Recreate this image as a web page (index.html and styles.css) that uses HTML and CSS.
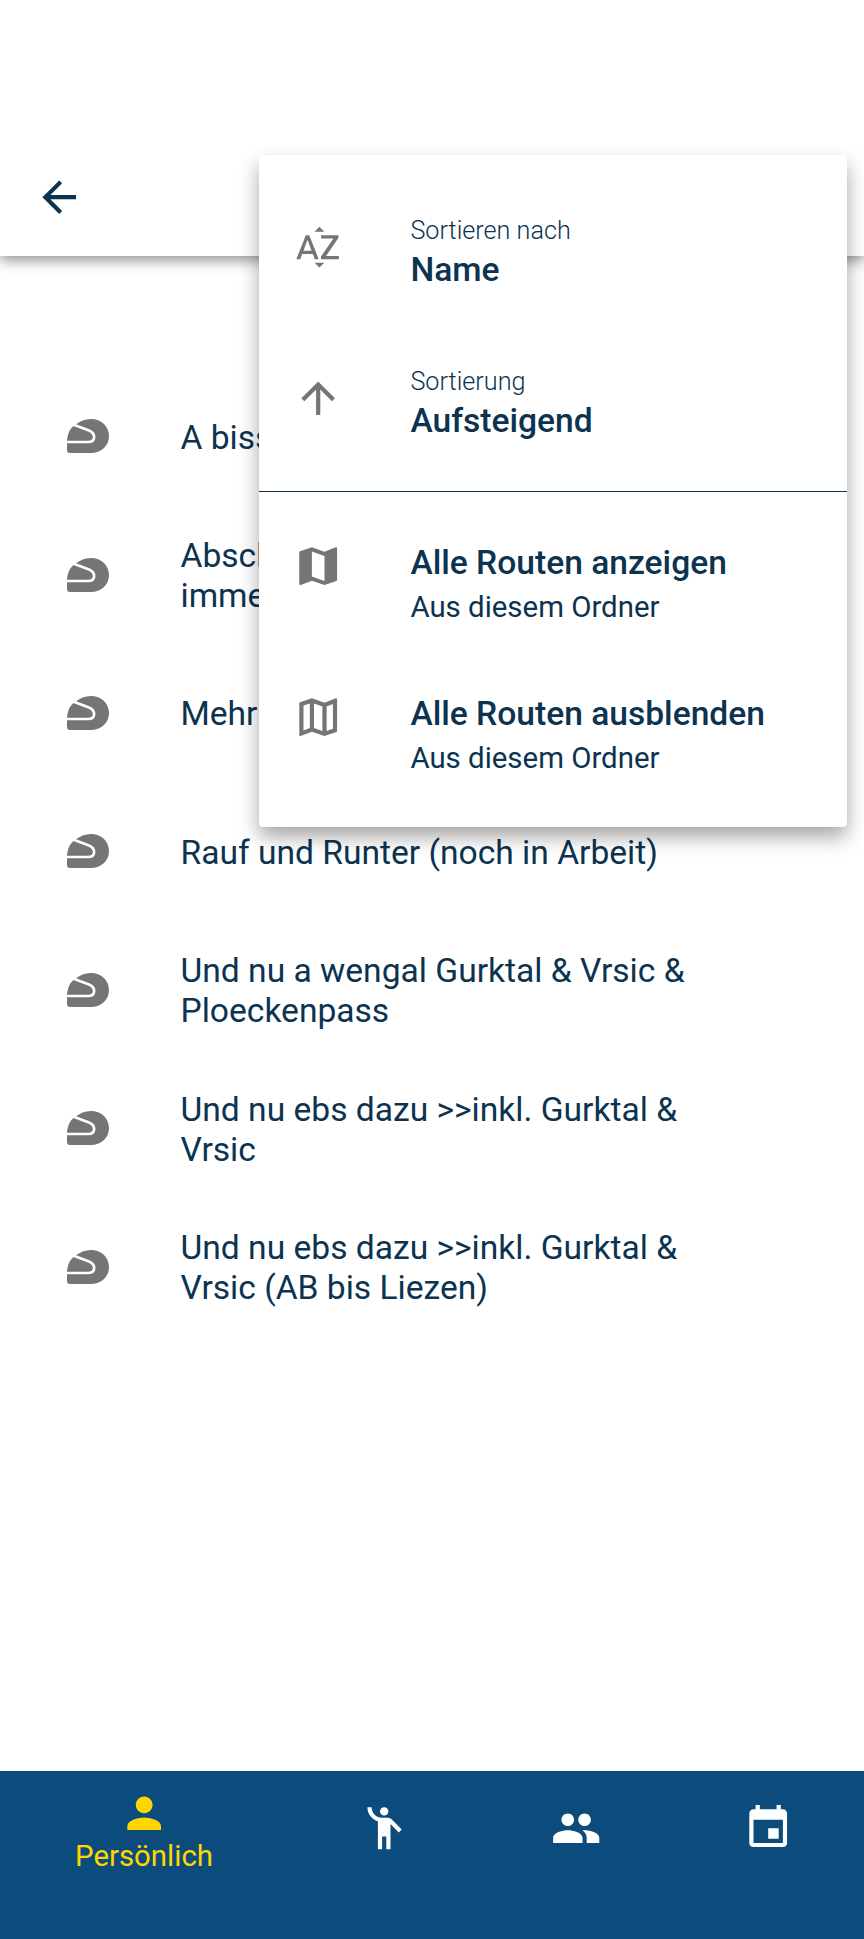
FILE: index.html
```html
<!DOCTYPE html>
<html lang="de">
  <head>
    <meta name="viewport" content="width=device-width, initial-scale=1.0" />
    <meta charset="utf-8" />
    <title>Routen</title>
    <link rel="stylesheet" href="styles.css">
  </head>
  <body>
    <div id="container">
      <header class="app-bar">
        <svg class="icon back-icon" viewBox="0 0 24 24"><path d="M20 11H7.83l5.59-5.59L12 4l-8 8 8 8 1.41-1.41L7.83 13H20v-2z"/></svg>
      </header>

      <main class="route-list">
        <div class="route-row">
          <svg class="helmet" viewBox="0 0 42 34"><use href="#helmet-shape"/></svg>
          <span class="route-name">A bissl wos geht immer</span>
        </div>
        <div class="route-row">
          <svg class="helmet" viewBox="0 0 42 34"><use href="#helmet-shape"/></svg>
          <span class="route-name">Abschlussrunde durch das Murtal, immer noch schön</span>
        </div>
        <div class="route-row">
          <svg class="helmet" viewBox="0 0 42 34"><use href="#helmet-shape"/></svg>
          <span class="route-name">Mehr Kurven im Murtal</span>
        </div>
        <div class="route-row">
          <svg class="helmet" viewBox="0 0 42 34"><use href="#helmet-shape"/></svg>
          <span class="route-name">Rauf und Runter (noch in Arbeit)</span>
        </div>
        <div class="route-row">
          <svg class="helmet" viewBox="0 0 42 34"><use href="#helmet-shape"/></svg>
          <span class="route-name">Und nu a wengal Gurktal &amp; Vrsic &amp; Ploeckenpass</span>
        </div>
        <div class="route-row">
          <svg class="helmet" viewBox="0 0 42 34"><use href="#helmet-shape"/></svg>
          <span class="route-name">Und nu ebs dazu &gt;&gt;inkl. Gurktal &amp; Vrsic</span>
        </div>
        <div class="route-row">
          <svg class="helmet" viewBox="0 0 42 34"><use href="#helmet-shape"/></svg>
          <span class="route-name">Und nu ebs dazu &gt;&gt;inkl. Gurktal &amp; Vrsic (AB bis Liezen)</span>
        </div>
      </main>

      <!-- popup menu lies over the list -->
      <div class="popup-menu">
        <div class="menu-group sort-group">
          <div class="menu-item">
            <svg class="icon" viewBox="0 0 24 24"><path d="M14.94 4.66h-4.72l2.36-2.36zm-4.69 14.71h4.66l-2.33 2.33zM6.1 6.27L1.6 17.73h1.84l.92-2.45h5.11l.92 2.45h1.84L7.74 6.27H6.1zm-1.13 7.37l1.94-5.18 1.94 5.18H4.97zm10.76 2.5h6.12v1.59h-8.53v-1.29l5.92-8.56h-5.88v-1.6h8.3v1.26l-5.93 8.6z"/></svg>
            <div class="menu-text">
              <span class="menu-hint">Sortieren nach</span>
              <span class="menu-title">Name</span>
            </div>
          </div>
          <div class="menu-item">
            <svg class="icon" viewBox="0 0 24 24"><path d="M4 12l1.41 1.41L11 7.83V20h2V7.83l5.58 5.59L20 12l-8-8-8 8z"/></svg>
            <div class="menu-text">
              <span class="menu-hint">Sortierung</span>
              <span class="menu-title">Aufsteigend</span>
            </div>
          </div>
        </div>
        <div class="menu-group toggle-group">
          <div class="menu-item">
            <svg class="icon" viewBox="0 0 24 24"><path d="M20.5 3l-.16.03L15 5.1 9 3 3.36 4.9c-.21.07-.36.25-.36.48V20.5c0 .28.22.5.5.5l.16-.03L9 18.9l6 2.1 5.64-1.9c.21-.07.36-.25.36-.48V3.5c0-.28-.22-.5-.5-.5zM15 19l-6-2.11V5l6 2.11V19z"/></svg>
            <div class="menu-text">
              <span class="menu-title">Alle Routen anzeigen</span>
              <span class="menu-sub">Aus diesem Ordner</span>
            </div>
          </div>
          <div class="menu-item">
            <svg class="icon" viewBox="0 0 24 24"><path d="M20.5 3l-.16.03L15 5.1 9 3 3.36 4.9c-.21.07-.36.25-.36.48V20.5c0 .28.22.5.5.5l.16-.03L9 18.9l6 2.1 5.64-1.9c.21-.07.36-.25.36-.48V3.5c0-.28-.22-.5-.5-.5zM10 5.47l4 1.4v11.66l-4-1.4V5.47zm-5 .99l3-1.01v11.7l-3 1.16V6.46zm14 11.08l-3 1.01V6.86l3-1.16v11.84z"/></svg>
            <div class="menu-text">
              <span class="menu-title">Alle Routen ausblenden</span>
              <span class="menu-sub">Aus diesem Ordner</span>
            </div>
          </div>
        </div>
      </div>

      <nav class="bottom-nav">
        <div class="nav-item active">
          <svg class="icon" viewBox="0 0 24 24"><path d="M12 12c2.21 0 4-1.79 4-4s-1.79-4-4-4-4 1.79-4 4 1.79 4 4 4zm0 2c-2.67 0-8 1.34-8 4v2h16v-2c0-2.66-5.33-4-8-4z"/></svg>
          <span class="nav-label">Persönlich</span>
        </div>
        <div class="nav-item">
          <svg class="icon" viewBox="0 0 24 24"><circle cx="12" cy="4" r="2"/><path d="M15.89 8.11C15.5 7.72 14.83 7 13.53 7h-2.54C8.24 6.99 6 4.75 6 2H4c0 3.16 2.11 5.84 5 6.71V22h2v-6h2v6h2V10.05L18.95 14l1.41-1.41-4.47-4.48z"/></svg>
        </div>
        <div class="nav-item">
          <svg class="icon" viewBox="0 0 24 24"><path d="M16 11c1.66 0 2.99-1.34 2.99-3S17.66 5 16 5c-1.66 0-3 1.34-3 3s1.34 3 3 3zm-8 0c1.66 0 2.99-1.34 2.99-3S9.66 5 8 5C6.34 5 5 6.34 5 8s1.34 3 3 3zm0 2c-2.33 0-7 1.17-7 3.5V19h14v-2.5c0-2.33-4.67-3.5-7-3.5zm8 0c-.29 0-.62.02-.97.05 1.16.84 1.97 1.97 1.97 3.45V19h6v-2.5c0-2.33-4.67-3.5-7-3.5z"/></svg>
        </div>
        <div class="nav-item">
          <svg class="icon" viewBox="0 0 24 24"><path d="M17 12h-5v5h5v-5zM16 1v2H8V1H6v2H5c-1.11 0-1.99.9-1.99 2L3 19c0 1.1.89 2 2 2h14c1.1 0 2-.9 2-2V5c0-1.1-.9-2-2-2h-1V1h-2zm3 18H5V8h14v11z"/></svg>
        </div>
      </nav>
    </div>

    <svg class="icon-defs" width="0" height="0">
      <defs>
        <g id="helmet-shape">
          <path class="helmet-body" d="M0 21C1 14 3 9 8 6C13 2 18 0 24 0C34 0 42 7 42 17C42 27 34 34 24 34H3C1 34 0 33 0 31Z"/>
          <path class="helmet-visor" d="M6 5.5L22 11.5C29 14.5 29 23 21 23H0"/>
        </g>
      </defs>
    </svg>
  </body>
</html>
```

FILE: styles.css
```css
* {
  box-sizing: border-box;
}

body {
  margin: 0;
  font-family: Roboto, sans-serif;
  color: #0c3350;
  background-color: #fff;
}

#container {
  position: relative;
  display: flex;
  flex-direction: column;
  width: 864px;
  height: 1939px;
  overflow: hidden;
}

.icon {
  display: block;
  width: 50.4px;
  height: 50.4px;
  flex: none;
  fill: #757575;
}

.icon-defs {
  position: absolute;
}

.app-bar {
  display: flex;
  align-items: flex-end;
  height: 256px;
  padding: 0 0 34px 34px;
  background-color: #fff;
  box-shadow: 0 5px 12px rgba(0, 0, 0, 0.4);
}

.back-icon {
  fill: #0c3350;
}

.route-list {
  flex: 1;
  padding-top: 111px;
}

.route-row {
  display: flex;
  align-items: center;
  height: 138.4px;
  padding-left: 67px;
}

.helmet {
  width: 42px;
  height: 34px;
  flex: none;
  margin-right: 71.5px;
}

.helmet-body {
  fill: #757575;
}

.helmet-visor {
  fill: none;
  stroke: #fff;
  stroke-width: 2.6;
}

.route-name {
  width: 520px;
  margin-top: 3px;
  font-size: 33.6px;
  line-height: 40px;
}

.popup-menu {
  position: absolute;
  top: 155px;
  left: 259px;
  width: 588px;
  background-color: #fff;
  border-radius: 4px;
  box-shadow: 0 10px 20px rgba(0, 0, 0, 0.35);
}

.sort-group {
  padding: 22px 0 12px;
}

.sort-group .icon {
  margin-bottom: 10px;
}

.toggle-group {
  padding: 16px 0 17px;
  border-top: 1px solid #0c3350;
}

.toggle-group .icon {
  margin-bottom: 34px;
}

.menu-item {
  display: flex;
  align-items: center;
  height: 151px;
  padding-left: 34px;
}

.menu-text {
  display: flex;
  flex-direction: column;
  margin-left: 67px;
}

.menu-hint {
  font-size: 25.2px;
  font-weight: 300;
  line-height: 35px;
}

.menu-title {
  font-size: 33.6px;
  font-weight: 500;
  line-height: 44px;
}

.menu-sub {
  margin-top: 2px;
  font-size: 29.4px;
  line-height: 40px;
}

.bottom-nav {
  display: flex;
  height: 168px;
  background-color: #0c4c7d;
}

.nav-item {
  display: flex;
  flex-direction: column;
  align-items: center;
  width: 192px;
  padding-top: 32px;
}

.nav-item .icon {
  fill: #fff;
}

.nav-item.active {
  width: 288px;
  padding-top: 17px;
}

.nav-item.active .icon {
  fill: #ffd600;
}

.nav-label {
  font-size: 29.4px;
  line-height: 36px;
  color: #ffd600;
}
```
